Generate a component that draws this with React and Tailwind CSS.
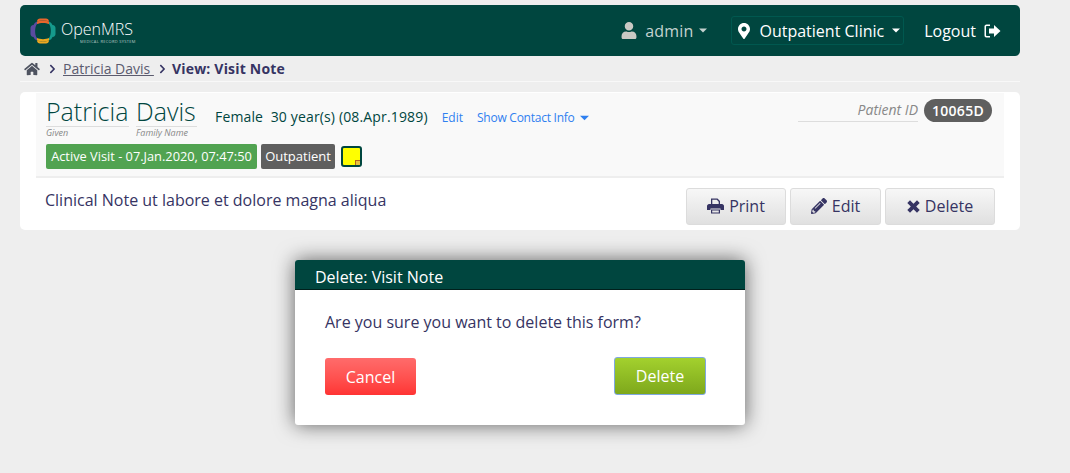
import React from 'react';
import { FaHome, FaUser, FaMapMarkerAlt, FaPencilAlt, FaChevronRight } from 'react-icons/fa';

const Logo = () => (
    <div className="flex items-center">
        <svg width="26" height="26" viewBox="0 0 26 26" className="mr-[5px]">
            <path d="M7 3.5 C7 1.5 8.5 0.5 10 0.5 L16 0.5 C17.5 0.5 19 1.5 19 3.5 C15.5 2 10.5 2 7 3.5 Z" fill="#e8662c" />
            <path d="M7 22.5 C7 24.5 8.5 25.5 10 25.5 L16 25.5 C17.5 25.5 19 24.5 19 22.5 C15.5 24 10.5 24 7 22.5 Z" fill="#eda821" />
            <path d="M7 3.5 C5 4.5 4.5 5 3.5 7 C1.5 7 0.5 8.5 0.5 10 L0.5 16 C0.5 17.5 1.5 19 3.5 19 C4.5 21 5 21.5 7 22.5 L7 20 C4.5 17 4.5 9 7 6 Z" fill="#5b4b9f" />
            <path d="M19 3.5 C21 4.5 21.5 5 22.5 7 C24.5 7 25.5 8.5 25.5 10 L25.5 16 C25.5 17.5 24.5 19 22.5 19 C21.5 21 21 21.5 19 22.5 L19 20 C21.5 17 21.5 9 19 6 Z" fill="#159a8c" />
            <path d="M7 3.5 C10.5 2 15.5 2 19 3.5 L19 6 C16 4.5 10 4.5 7 6 Z" fill="#e8662c" />
            <path d="M7 22.5 C10.5 24 15.5 24 19 22.5 L19 20 C16 21.5 10 21.5 7 20 Z" fill="#eda821" />
        </svg>
        <div className="flex flex-col pt-[3px]">
            <span className="text-[16px] leading-[19px] text-white font-light">OpenMRS</span>
            <span className="text-[4px] leading-[5px] text-[#b9c9c6] tracking-[0.3px] ml-[19px] whitespace-nowrap">MEDICAL RECORD SYSTEM</span>
        </div>
    </div>
);

const Caret = ({ className }) => (
    <svg viewBox="0 0 10 6" className={className} fill="currentColor">
        <path d="M0 0.5 L10 0.5 L5 5.5 Z" />
    </svg>
);

const SignOutIcon = () => (
    <svg width="17" height="14" viewBox="0 0 17 14" fill="#fff">
        <path d="M6 0.5 L2.5 0.5 C1.2 0.5 0.5 1.5 0.5 2.5 L0.5 11.5 C0.5 12.5 1.2 13.5 2.5 13.5 L6 13.5 L6 12 L3 12 C2.4 12 2 11.6 2 11 L2 3 C2 2.4 2.4 2 3 2 L6 2 Z" />
        <path d="M10 1 L16.5 7 L10 13 L10 9.5 L5 9.5 L5 4.5 L10 4.5 Z" />
    </svg>
);

const PrintIcon = () => (
    <svg width="17" height="16" viewBox="0 0 17 16" fill="currentColor">
        <path d="M4 0.5 L10.5 0.5 L13 3 L13 6 L11.7 6 L11.7 3.8 L9.8 1.8 L5.3 1.8 L5.3 6 L4 6 Z" />
        <path d="M2 6 L15 6 C16 6 17 7 17 8 L17 12 L13.5 12 L13.5 10.5 L3.5 10.5 L3.5 12 L0 12 L0 8 C0 7 1 6 2 6 Z" />
        <path d="M4 11.5 L13 11.5 L13 15.5 L4 15.5 Z M5.2 12.6 L5.2 14.4 L11.8 14.4 L11.8 12.6 Z" fillRule="evenodd" />
    </svg>
);

const CrossIcon = () => (
    <svg width="13" height="13" viewBox="0 0 13 13" fill="currentColor">
        <path d="M3 0.3 L6.5 3.8 L10 0.3 L12.7 3 L9.2 6.5 L12.7 10 L10 12.7 L6.5 9.2 L3 12.7 L0.3 10 L3.8 6.5 L0.3 3 Z" />
    </svg>
);

const ActionButton = ({ icon, label, width }) => (
    <button className={`${width} h-[37px] pb-[1px] flex items-center justify-center gap-[5px] rounded-[3px] border border-[#dcdcdc] bg-gradient-to-b from-[#f7f7f7] to-[#e0e0e0] text-[16px] text-[#363463]`}>
        {icon}
        <span>{label}</span>
    </button>
);

const App = () => {
    return (
        <div className="min-h-[473px] bg-[#eeeeee] pl-[20px] pr-[50px] pt-[5px] font-['Open_Sans',sans-serif] text-[#363463] overflow-hidden">
            {/* Header */}
            <header className="h-[51px] bg-[#00463f] rounded-[5px] flex items-center pl-[10px] pr-[19px]">
                <Logo />
                <div className="ml-auto flex items-center">
                    <FaUser className="w-[16px] h-[17px] text-[#c9c9c4]" />
                    <span className="ml-[8px] text-[16px] text-[#c4d2cf] tracking-[0.2px]">admin</span>
                    <Caret className="ml-[6px] w-[8px] h-[5px] text-[#c4d2cf]" />
                    <div className="ml-[24px] h-[29px] flex items-center border border-[#00584f] rounded-[3px] pl-[6px] pr-[3px] text-white">
                        <FaMapMarkerAlt className="w-[12px] h-[16px]" />
                        <span className="ml-[9px] text-[16px]">Outpatient Clinic</span>
                        <Caret className="ml-[8px] w-[8px] h-[5px]" />
                    </div>
                    <span className="ml-[20px] text-[16px] text-white">Logout</span>
                    <span className="ml-[8px]"><SignOutIcon /></span>
                </div>
            </header>

            {/* Breadcrumb */}
            <nav className="h-[26px] border-b border-[#f8f8f8] flex items-center pl-[4px] text-[14px]">
                <FaHome className="w-[16px] h-[14px] text-[#4e5360]" />
                <FaChevronRight className="ml-[9px] w-[7px] h-[10px]" />
                <span className="ml-[7px] text-[#5b5b6e] underline">Patricia Davis&nbsp;</span>
                <FaChevronRight className="ml-[5px] w-[7px] h-[10px]" />
                <span className="ml-[6px] font-bold tracking-[0.2px]">View: Visit Note</span>
            </nav>

            {/* Patient card */}
            <section className="mt-[10px] h-[138px] bg-white rounded-[5px] px-[16px] pt-[1px]">
                <div className="h-[85px] bg-[#f9f9f9] border-b-2 border-[#eeeeee] flex pl-[10px] pr-[12px] pt-[4px]">
                    <div className="flex flex-col">
                        <div className="flex items-start">
                            <div className="flex flex-col w-[83px]">
                                <span className="text-[25px] leading-[28px] font-light text-[#00463f] whitespace-nowrap">Patricia</span>
                                <span className="mt-[1px] border-t border-[#dddddd] text-[9px] leading-[11px] italic text-[#888888]">Given</span>
                            </div>
                            <div className="flex flex-col w-[61px] ml-[7px]">
                                <span className="text-[25px] leading-[28px] font-light text-[#00463f]">Davis</span>
                                <span className="mt-[1px] border-t border-[#dddddd] text-[9px] leading-[11px] italic text-[#888888] whitespace-nowrap">Family Name</span>
                            </div>
                            <span className="ml-[18px] mt-[11px] text-[14px] leading-[18px] text-[#00463f] tracking-[0.15px] whitespace-pre">Female  30 year(s) (08.Apr.1989)</span>
                            <span className="ml-[14px] mt-[12px] text-[12px] leading-[18px] text-[#2f80f0]">Edit</span>
                            <span className="ml-[14px] mt-[12px] text-[12px] leading-[18px] text-[#2f80f0] tracking-[-0.25px]">Show Contact Info</span>
                            <Caret className="ml-[5px] mt-[18px] w-[9px] h-[6px] text-[#2f80f0]" />
                        </div>
                        <div className="mt-[6px] flex items-center gap-[4px]">
                            <span className="h-[25px] w-[211px] flex items-center justify-center rounded-[2px] bg-[#51a351] text-white text-[12.8px] whitespace-nowrap">Active Visit - 07.Jan.2020, 07:47:50</span>
                            <span className="h-[25px] w-[74px] flex items-center justify-center rounded-[2px] bg-[#5f5f5f] text-white text-[13px]">Outpatient</span>
                            <span className="relative ml-[2px] w-[21px] h-[21px] bg-[#ffff00] border-2 border-[#00463f] rounded-[3px]">
                                <span className="absolute right-0 bottom-0 w-[5px] h-[5px] bg-[#e8c040] border-l border-t border-[#b5651d]" />
                            </span>
                        </div>
                    </div>
                    <div className="ml-auto flex items-start">
                        <span className="mt-[3px] w-[120px] h-[22px] border-b border-[#dddddd] text-right text-[14px] leading-[19px] italic text-[#888888]">Patient ID</span>
                        <span className="ml-[6px] mt-[2px] h-[23px] w-[68px] flex items-center justify-center rounded-full bg-[#5f5f5f] text-white text-[14px] font-semibold tracking-[0.3px]">10065D</span>
                    </div>
                </div>
                <div className="flex pl-[9px] pr-[9px]">
                    <p className="mt-[10px] text-[16px] leading-[24px] whitespace-nowrap">Clinical Note ut labore et dolore magna aliqua</p>
                    <div className="ml-auto mt-[10px] flex gap-[4px]">
                        <ActionButton icon={<PrintIcon />} label="Print" width="w-[100px]" />
                        <ActionButton icon={<FaPencilAlt className="w-[16px] h-[16px]" />} label="Edit" width="w-[91px]" />
                        <ActionButton icon={<CrossIcon />} label="Delete" width="w-[110px]" />
                    </div>
                </div>
            </section>

            {/* Delete dialog */}
            <div className="mt-[30px] ml-[275px] w-[450px] h-[165px] bg-white rounded-[3px] shadow-[0_0_20px_rgba(0,0,0,0.6)] overflow-hidden">
                <div className="h-[30px] bg-[#00463f] border-b border-[#00201c] pl-[20px] text-white text-[16px] leading-[35px]">Delete: Visit Note</div>
                <div className="pl-[30px] pr-[39px]">
                    <p className="mt-[20px] text-[16px] leading-[24px]">Are you sure you want to delete this form?</p>
                    <div className="mt-[24px] flex justify-between">
                        <button className="w-[91px] h-[37px] rounded-[3px] bg-gradient-to-b from-[#ff6b6b] to-[#ff3333] text-white text-[16px]">Cancel</button>
                        <button className="w-[92px] h-[38px] -mt-[1px] rounded-[3px] border border-[#7fa8e0] bg-gradient-to-b from-[#a3d12e] to-[#7ea81c] text-white text-[16px]">Delete</button>
                    </div>
                </div>
            </div>
        </div>
    );
};

export default App;
